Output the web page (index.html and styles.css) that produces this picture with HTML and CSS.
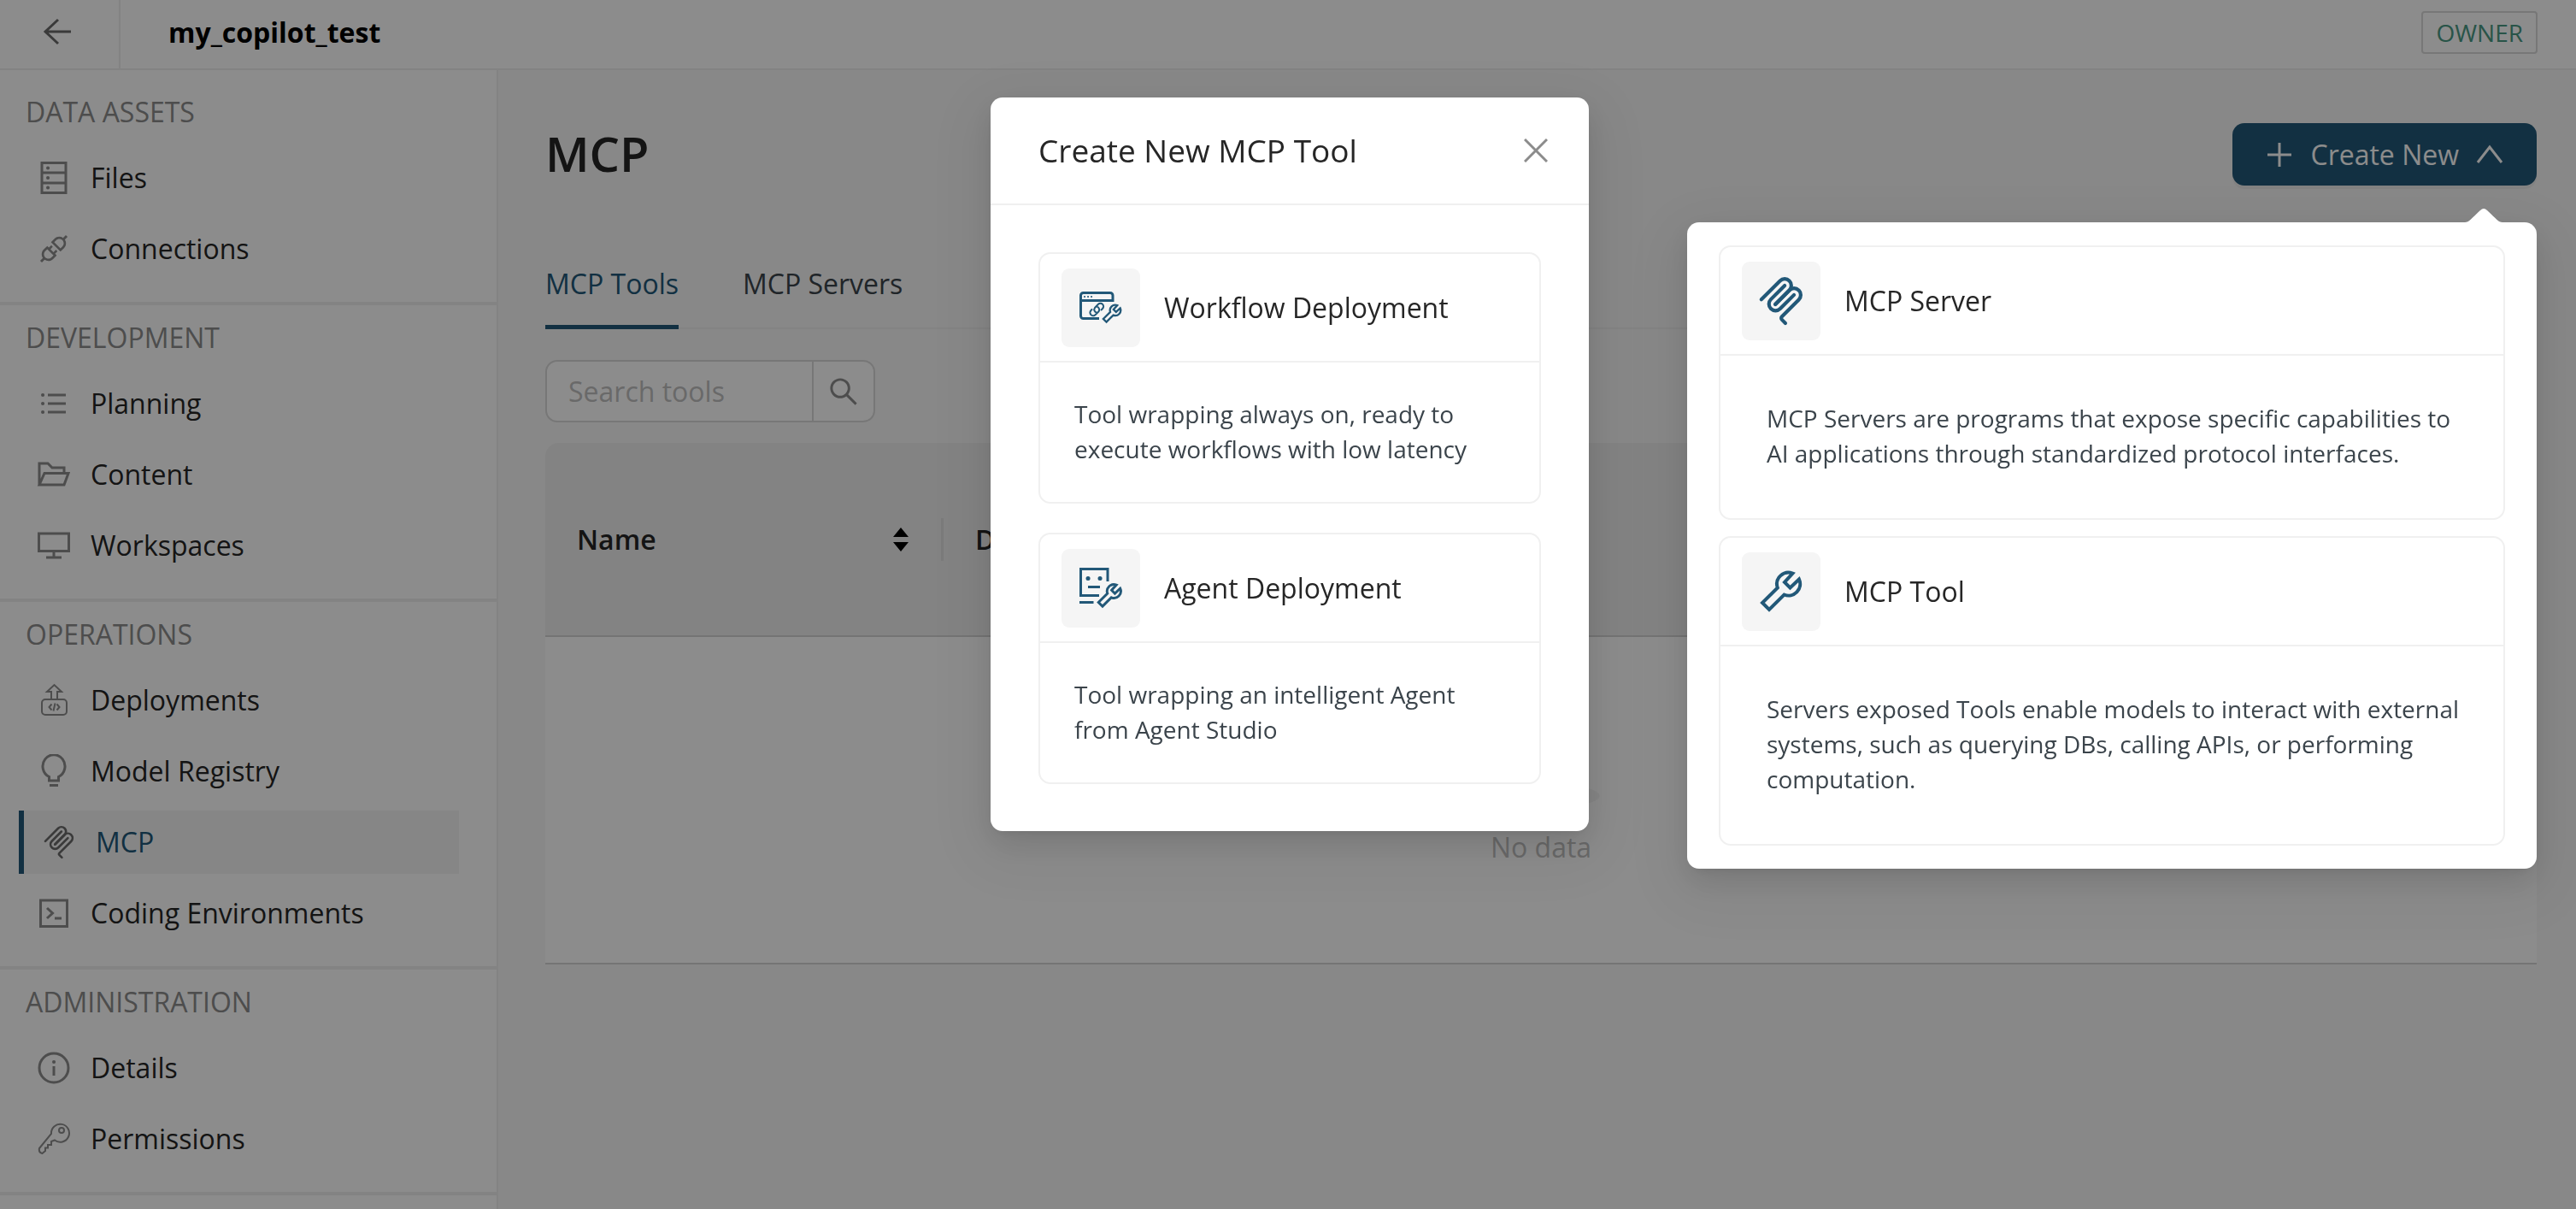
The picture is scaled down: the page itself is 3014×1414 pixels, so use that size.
FILE: index.html
```html
<!DOCTYPE html>
<html lang="en">
<head>
    <meta charset="UTF-8">
    <meta name="viewport" content="width=device-width, initial-scale=1.0">
    <title>my_copilot_test - MCP</title>
    <link rel="stylesheet" href="styles.css">
</head>
<body>
    <!-- shared icons -->
    <svg class="defs" aria-hidden="true">
        <symbol id="i-mcp" viewBox="0 0 180 180">
            <path d="M18 84.85L85.88 16.97C95.25 7.6 110.45 7.6 119.82 16.97C129.2 26.34 129.2 41.54 119.82 50.91L68.56 102.18"/>
            <path d="M69.27 101.47L119.82 50.91C129.2 41.54 144.39 41.54 153.77 50.91L154.12 51.27C163.49 60.64 163.49 75.83 154.12 85.21L92.72 146.6C89.6 149.72 89.6 154.79 92.72 157.91L105.33 170.52"/>
            <path d="M102.85 33.94L52.65 84.15C43.28 93.52 43.28 108.71 52.65 118.09C62.02 127.46 77.22 127.46 86.59 118.09L136.79 67.88"/>
        </symbol>
        <symbol id="i-wrench" viewBox="0 0 50 50" overflow="visible">
            <path d="M38.5 3.5A13.5 13.5 0 0 0 20.8 20.5L3 38L11 46L28.5 28.5A13.5 13.5 0 0 0 46 10.5L35.5 20.5L29 14Z"/>
        </symbol>
    </svg>

    <header class="topbar">
        <button class="back" aria-label="Back">
            <svg class="icon" viewBox="0 0 40 40"><path d="M36 20H6M21 6L6 20L21 34"/></svg>
        </button>
        <div class="project">my_copilot_test</div>
        <span class="role">OWNER</span>
    </header>

    <div class="layout">
        <nav class="sidebar">
            <section class="group">
                <h2>DATA ASSETS</h2>
                <a class="item" href="#">
                    <svg class="icon" viewBox="0 0 40 40"><path d="M6 2.5H34V37.5H6ZM6 14H34M6 26H34"/><path class="dot" d="M13 8.5h.1M13 20h.1M13 31.5h.1"/></svg>
                    Files
                </a>
                <a class="item" href="#">
                    <svg class="icon solid" viewBox="0 0 1024 1024"><path d="M917.7 148.8l-42.4-42.4c-1.6-1.6-3.6-2.3-5.7-2.3s-4.1.8-5.7 2.3l-76.1 76.1a199.27 199.27 0 00-112.1-34.3c-51.2 0-102.4 19.5-141.5 58.6L432.3 308.7a8.03 8.03 0 000 11.3L704 591.7c1.6 1.6 3.6 2.3 5.7 2.3 2 0 4.1-.8 5.7-2.3l101.9-101.9c68.9-69 77-175.7 24.3-253.5l76.1-76.1c3.1-3.2 3.1-8.3 0-11.4zM769.1 441.7l-59.4 59.4-186.8-186.8 59.4-59.4c24.9-24.9 58.1-38.7 93.4-38.7 35.3 0 68.4 13.7 93.4 38.7 24.9 24.9 38.7 58.1 38.7 93.4 0 35.3-13.8 68.4-38.7 93.4zm-190.2 105a8.03 8.03 0 00-11.3 0L501 613.3 410.7 523l66.7-66.7c3.1-3.1 3.1-8.2 0-11.3L441 408.6a8.03 8.03 0 00-11.3 0L363 475.3l-43-43a7.85 7.85 0 00-5.7-2.3c-2 0-4.1.8-5.7 2.3L206.8 534.2c-68.9 69-77 175.7-24.3 253.5l-76.1 76.1a8.03 8.03 0 000 11.3l42.4 42.4c1.6 1.6 3.6 2.3 5.7 2.3s4.1-.8 5.7-2.3l76.1-76.1c33.7 22.9 72.9 34.3 112.1 34.3 51.2 0 102.4-19.5 141.5-58.6l101.9-101.9c3.1-3.1 3.1-8.2 0-11.3l-43-43 66.7-66.7c3.1-3.1 3.1-8.2 0-11.3l-36.6-36.2zM441.7 769.1a131.32 131.32 0 01-93.4 38.7c-35.3 0-68.4-13.7-93.4-38.7a131.32 131.32 0 01-38.7-93.4c0-35.3 13.7-68.4 38.7-93.4l59.4-59.4 186.8 186.8-59.4 59.4z"/></svg>
                    Connections
                </a>
            </section>

            <section class="group">
                <h2>DEVELOPMENT</h2>
                <a class="item" href="#">
                    <svg class="icon" viewBox="0 0 40 40"><path d="M13 10H34M13 20H34M13 30H34"/><path class="dot" d="M7 10h.1M7 20h.1M7 30h.1"/></svg>
                    Planning
                </a>
                <a class="item" href="#">
                    <svg class="icon" viewBox="0 0 40 40"><path d="M3 32V7H13L18 12H32V19M3 32L9 18.5H37L32 32Z"/></svg>
                    Content
                </a>
                <a class="item" href="#">
                    <svg class="icon" viewBox="0 0 40 40"><path d="M2.5 6H37.5V26.5H2.5ZM20 26.5V34M11 34H29"/></svg>
                    Workspaces
                </a>
            </section>

            <section class="group">
                <h2>OPERATIONS</h2>
                <a class="item" href="#">
                    <svg class="icon thin" viewBox="0 0 40 40"><rect x="6" y="19" width="29" height="18" rx="4"/><path d="M17 19V10H12L20.5 2L29 10H24V19M17.5 24.5L14.5 28L17.5 31.5M23.5 24.5L26.5 28L23.5 31.5M21.5 23.5L19.5 32.5"/></svg>
                    Deployments
                </a>
                <a class="item" href="#">
                    <svg class="icon" viewBox="0 0 40 40"><path d="M14.5 31V26.5A13 13.5 0 1 1 25.5 26.5V31ZM15 36.5H25"/></svg>
                    Model Registry
                </a>
                <a class="item active" href="#" aria-current="page">
                    <svg class="icon mcp"><use href="#i-mcp"/></svg>
                    MCP
                </a>
                <a class="item" href="#">
                    <svg class="icon" viewBox="0 0 40 40"><path d="M4.5 5H35.5V35.5H4.5ZM12 14L18.5 20L12 26M21 26H29"/></svg>
                    Coding Environments
                </a>
            </section>

            <section class="group">
                <h2>ADMINISTRATION</h2>
                <a class="item" href="#">
                    <svg class="icon" viewBox="0 0 40 40"><circle cx="20" cy="20" r="17"/><path d="M20 18V29"/><path class="dot" d="M20 13h.1"/></svg>
                    Details
                </a>
                <a class="item" href="#">
                    <svg class="icon thin" viewBox="0 0 40 40"><path d="M21 21.5A10.5 10.5 0 1 0 17 14L3 31Q2 36 6.5 37L10 34V30.5H13V27H17V23L21 21.5Z"/><circle cx="29" cy="10" r="3"/></svg>
                    Permissions
                </a>
            </section>
        </nav>

        <main class="content">
            <div class="title-row">
                <h1>MCP</h1>
                <div class="create">
                    <button class="create-btn">
                        <svg class="icon" viewBox="0 0 40 40"><path d="M20 6V34M6 20H34"/></svg>
                        Create New
                        <svg class="icon" viewBox="0 0 40 40"><path d="M6 29L20 11L34 29"/></svg>
                    </button>
                    <div class="popover">
                        <svg class="arrow" viewBox="0 0 44 16"><path d="M0 16C5 16 7 12 18 2Q22-2 26 2C37 12 39 16 44 16Z"/></svg>
                        <div class="card">
                            <div class="card-head">
                                <span class="tile"><svg class="glyph mcp"><use href="#i-mcp"/></svg></span>
                                <h3>MCP Server</h3>
                            </div>
                            <p>MCP Servers are programs that expose specific capabilities to AI applications through standardized protocol interfaces.</p>
                        </div>
                        <div class="card">
                            <div class="card-head">
                                <span class="tile"><svg class="glyph wrench"><use href="#i-wrench"/></svg></span>
                                <h3>MCP Tool</h3>
                            </div>
                            <p>Servers exposed Tools enable models to interact with external systems, such as querying DBs, calling APIs, or performing computation.</p>
                        </div>
                    </div>
                </div>
            </div>

            <div class="tabs" role="tablist">
                <button class="tab selected" role="tab" aria-selected="true">MCP Tools</button>
                <button class="tab" role="tab" aria-selected="false">MCP Servers</button>
            </div>

            <form class="search">
                <input type="text" placeholder="Search tools" aria-label="Search tools">
                <button type="button" aria-label="Search">
                    <svg class="icon solid" viewBox="0 0 1024 1024"><path d="M909.6 854.5L649.9 594.8C690.2 542.7 712 479 712 412c0-80.2-31.3-155.4-87.9-212.1-56.6-56.7-132-87.9-212.1-87.9s-155.5 31.3-212.1 87.9C143.2 256.5 112 331.8 112 412c0 80.1 31.3 155.5 87.9 212.1C256.5 680.8 331.8 712 412 712c67 0 130.6-21.8 182.7-62l259.7 259.6a8.2 8.2 0 0011.6 0l43.6-43.5a8.2 8.2 0 000-11.6zM570.4 570.4C528 612.7 471.8 636 412 636s-116-23.3-158.4-65.6C211.3 528 188 471.8 188 412s23.3-116.1 65.6-158.4C296 211.3 352.2 188 412 188s116.1 23.2 158.4 65.6S636 352.2 636 412s-23.3 116.1-65.6 158.4z"/></svg>
                </button>
            </form>

            <table class="tools">
                <thead>
                    <tr>
                        <th class="name-col">
                            <div class="th-inner">
                                Name
                                <svg class="sorter" viewBox="0 0 18 28"><path d="M0 11L9 0L18 11ZM0 17L9 28L18 17Z"/></svg>
                            </div>
                        </th>
                        <th>Description</th>
                    </tr>
                </thead>
                <tbody>
                    <tr>
                        <td class="empty" colspan="2">
                            <svg viewBox="0 0 64 41"><ellipse cx="32" cy="33" rx="32" ry="7"/><path d="M55 12.76L44.85 1.26C44.37.47 43.66 0 42.91 0H21.09c-.75 0-1.46.47-1.94 1.26L9 12.76V22h46v-9.24z"/></svg>
                            <div>No data</div>
                        </td>
                    </tr>
                </tbody>
            </table>
        </main>
    </div>

    <div class="mask"></div>

    <div class="modal" role="dialog" aria-labelledby="modal-title">
        <div class="modal-head">
            <h2 id="modal-title">Create New MCP Tool</h2>
            <button class="close" aria-label="Close">
                <svg viewBox="0 0 28 28"><path d="M1 1L27 27M27 1L1 27"/></svg>
            </button>
        </div>
        <div class="modal-body">
            <div class="card">
                <div class="card-head">
                    <span class="tile">
                        <svg class="glyph workflow" viewBox="0 0 50 38">
                            <path d="M23 31.5H4.5A3 3 0 0 1 1.5 28.5V4.5A3 3 0 0 1 4.5 1.5H36A3 3 0 0 1 39 4.5V10.5H1.5"/>
                            <path class="dot" d="M6 6h.1M10 6h.1M14 6h.1"/>
                            <path class="link" d="M20 24.5A3.5 3.5 0 0 1 18 19L22 14.8A3.6 3.6 0 0 1 27 20L25 22M20.5 17.8A3.5 3.5 0 0 1 22.5 23.3L18.5 27.2A3.6 3.6 0 0 1 13.5 22L15 20.3"/>
                            <g class="mini" transform="translate(26.5 14.5) scale(.46)"><path d="M38.5 3.5A13.5 13.5 0 0 0 20.8 20.5L3 38L11 46L28.5 28.5A13.5 13.5 0 0 0 46 10.5L35.5 20.5L29 14Z"/></g>
                        </svg>
                    </span>
                    <h3>Workflow Deployment</h3>
                </div>
                <p>Tool wrapping always on, ready to execute workflows with low latency</p>
            </div>
            <div class="card">
                <div class="card-head">
                    <span class="tile">
                        <svg class="glyph agent" viewBox="0 0 50 48">
                            <path d="M33 16V1.5H1.5V32.5H23M10 22.5H24M0 40.5H16.5"/>
                            <path class="dot eye" d="M10 12.5h.1M24 12.5h.1"/>
                            <g class="mini" transform="translate(20.5 18) scale(.59)"><path d="M38.5 3.5A13.5 13.5 0 0 0 20.8 20.5L3 38L11 46L28.5 28.5A13.5 13.5 0 0 0 46 10.5L35.5 20.5L29 14Z"/></g>
                        </svg>
                    </span>
                    <h3>Agent Deployment</h3>
                </div>
                <p>Tool wrapping an intelligent Agent from Agent Studio</p>
            </div>
        </div>
    </div>
</body>
</html>
```
FILE: styles.css
```css
* {
    box-sizing: border-box;
}
body {
    margin: 0;
    font-family: "Open Sans", "Noto Sans", sans-serif;
    font-size: 32px;
    line-height: 44px;
    color: #262626;
    background: #f7f7f7;
}
h1, h2, h3, p {
    margin: 0;
    font-weight: 400;
}
button, input {
    font: inherit;
    color: inherit;
    margin: 0;
    padding: 0;
    border: none;
    background: none;
}
button {
    cursor: pointer;
}
.defs {
    display: none;
}
.icon {
    width: 40px;
    height: 40px;
    flex: none;
    fill: none;
    stroke: currentColor;
    stroke-width: 3;
}
.icon.thin {
    stroke-width: 2;
}
.icon.solid {
    fill: currentColor;
    stroke: none;
}
.icon .dot {
    stroke-width: 4;
    stroke-linecap: round;
}

/* top bar */
.topbar {
    display: flex;
    align-items: center;
    height: 82px;
    padding-right: 45px;
    background: #fff;
    border-bottom: 2px solid #eee;
}
.back {
    display: flex;
    align-items: center;
    justify-content: center;
    width: 141px;
    height: 80px;
    padding: 0 6px 7px 0;
    border-right: 2px solid #eee;
    color: #6b6b6b;
}
.project {
    flex: 1;
    padding: 0 56px 4px;
    font-weight: 700;
    color: #000;
}
.role {
    padding: 3px 15px;
    font-size: 28px;
    line-height: 40px;
    color: #4a9a84;
    border: 2px solid #d9d9d9;
    border-radius: 4px;
    margin-bottom: 4px;
}

/* sidebar */
.layout {
    display: flex;
    min-height: calc(100vh - 82px);
}
.sidebar {
    width: 583px;
    flex: none;
    padding-top: 11px;
    background: #fff;
    border-right: 2px solid #eee;
}
.group {
    display: flex;
    flex-direction: column;
    gap: 9px;
    padding: 16px 44px 25px 22px;
    border-bottom: 4px solid #eee;
}
.group h2 {
    margin: 0 0 9px 8px;
    font-size: 32px;
    color: #8c8c8c;
}
.item {
    display: flex;
    align-items: center;
    gap: 23px;
    height: 74px;
    padding-left: 21px;
    color: #262626;
    text-decoration: none;
}
.item .icon {
    color: #8c8c8c;
}
.item.active {
    color: #225878;
    background: #f5f5f5;
    border-left: 6px solid #225878;
}
.item .mcp {
    stroke-width: 12;
    stroke-linecap: round;
    color: #6b6b6b;
}

/* main area */
.content {
    flex: 1;
    min-width: 0;
    padding: 62px 46px 62px 55px;
}
.title-row {
    display: flex;
    align-items: flex-start;
    justify-content: space-between;
}
h1 {
    font-size: 56px;
    line-height: 70px;
    font-weight: 600;
}
.create {
    position: relative;
}
.create-btn {
    display: flex;
    align-items: center;
    gap: 16px;
    height: 73px;
    padding: 0 35px;
    color: #fff;
    background: #225878;
    border-radius: 14px;
    box-shadow: 0 4px 0 rgba(0, 0, 0, 0.04);
}
.tabs {
    display: flex;
    gap: 75px;
    margin-top: 80px;
    border-bottom: 2px solid #eee;
}
.tab {
    height: 88px;
    margin-bottom: -2px;
    padding-bottom: 14px;
    color: #3b444b;
    border-bottom: 5px solid transparent;
}
.tab.selected {
    color: #225878;
    border-color: #225878;
}
.search {
    display: flex;
    margin-top: 36px;
}
.search input {
    width: 314px;
    height: 73px;
    padding: 0 25px;
    background: #fff;
    border: 2px solid #d9d9d9;
    border-radius: 14px 0 0 14px;
}
.search input::placeholder {
    color: #bfbfbf;
    opacity: 1;
}
.search button {
    display: flex;
    align-items: center;
    justify-content: center;
    width: 74px;
    height: 73px;
    margin-left: -2px;
    color: #8c8c8c;
    background: #fff;
    border: 2px solid #d9d9d9;
    border-radius: 0 14px 14px 0;
}
.tools {
    width: 100%;
    margin-top: 24px;
    border-collapse: separate;
    border-spacing: 0;
    table-layout: fixed;
}
.tools th {
    height: 227px;
    padding: 0 37px;
    text-align: left;
    font-weight: 600;
    background: #eee;
    border-bottom: 2px solid #d4d4d4;
}
.tools th:first-child {
    border-top-left-radius: 16px;
}
.tools th:last-child {
    border-top-right-radius: 16px;
}
.tools .name-col {
    width: 466px;
    padding-right: 0;
}
.th-inner {
    display: flex;
    align-items: center;
    justify-content: space-between;
    height: 50px;
    padding-right: 38px;
    border-right: 3px solid #e0e0e0;
}
.sorter {
    width: 18px;
    height: 28px;
}
.tools .empty {
    padding: 115px 0 113px;
    text-align: center;
    color: #bfbfbf;
    background: #fff;
    border-bottom: 2px solid #d4d4d4;
}
.empty svg {
    display: block;
    width: 138px;
    height: 88px;
    margin: 0 auto 21px;
    fill: #f5f5f5;
}

/* cards */
.card {
    border: 2px solid #f0f0f0;
    border-radius: 14px;
}
.card-head {
    display: flex;
    align-items: center;
    gap: 28px;
    height: 127px;
    padding: 0 25px;
    border-bottom: 2px solid #f0f0f0;
}
.card h3 {
    font-size: 32px;
}
.card p {
    font-size: 28px;
    line-height: 41px;
    color: #3b444b;
}
.tile {
    display: flex;
    align-items: center;
    justify-content: center;
    width: 92px;
    height: 92px;
    background: #f5f5f5;
    border-radius: 9px;
}
.glyph {
    fill: none;
    stroke: #225878;
    stroke-width: 3;
}
.glyph.mcp {
    width: 58px;
    height: 58px;
    stroke-width: 13;
    stroke-linecap: round;
}
.glyph.wrench {
    width: 50px;
    height: 50px;
    stroke-width: 4;
}
.glyph.workflow {
    width: 50px;
    height: 38px;
}
.glyph.agent {
    width: 50px;
    height: 48px;
}
.glyph .mini {
    stroke-width: 5;
}
.glyph .link {
    stroke-width: 2;
}
.glyph .dot {
    stroke-width: 2;
    stroke-linecap: round;
}
.glyph .eye {
    stroke-width: 5;
}

/* overlays */
.mask {
    position: fixed;
    inset: 0;
    z-index: 10;
    background: rgba(0, 0, 0, 0.45);
}
.popover {
    position: absolute;
    top: 116px;
    right: 0;
    z-index: 20;
    display: flex;
    flex-direction: column;
    gap: 19px;
    width: 994px;
    padding: 27px 37px;
    background: #fff;
    border-radius: 14px;
    box-shadow: 0 14px 36px rgba(0, 0, 0, 0.1), 0 6px 14px -8px rgba(0, 0, 0, 0.14), 0 20px 64px 18px rgba(0, 0, 0, 0.05);
}
.popover p {
    padding: 53px 40px 55px 54px;
}
.arrow {
    position: absolute;
    top: -16px;
    right: 40px;
    width: 44px;
    height: 16px;
    fill: #fff;
}
.modal {
    position: absolute;
    top: 114px;
    left: 1159px;
    z-index: 20;
    width: 700px;
    background: #fff;
    border-radius: 14px;
    box-shadow: 0 14px 36px rgba(0, 0, 0, 0.1), 0 6px 14px -8px rgba(0, 0, 0, 0.14), 0 20px 64px 18px rgba(0, 0, 0, 0.05);
}
.modal-head {
    display: flex;
    align-items: center;
    justify-content: space-between;
    height: 126px;
    padding: 0 48px 0 56px;
    border-bottom: 2px solid #f0f0f0;
}
.modal-head h2 {
    font-size: 37px;
}
.close {
    display: flex;
}
.close svg {
    width: 28px;
    height: 28px;
    stroke: #8c8c8c;
    stroke-width: 3;
}
.modal-body {
    display: flex;
    flex-direction: column;
    gap: 34px;
    padding: 55px 56px;
}
.modal p {
    padding: 40px 40px 41px;
}
```
